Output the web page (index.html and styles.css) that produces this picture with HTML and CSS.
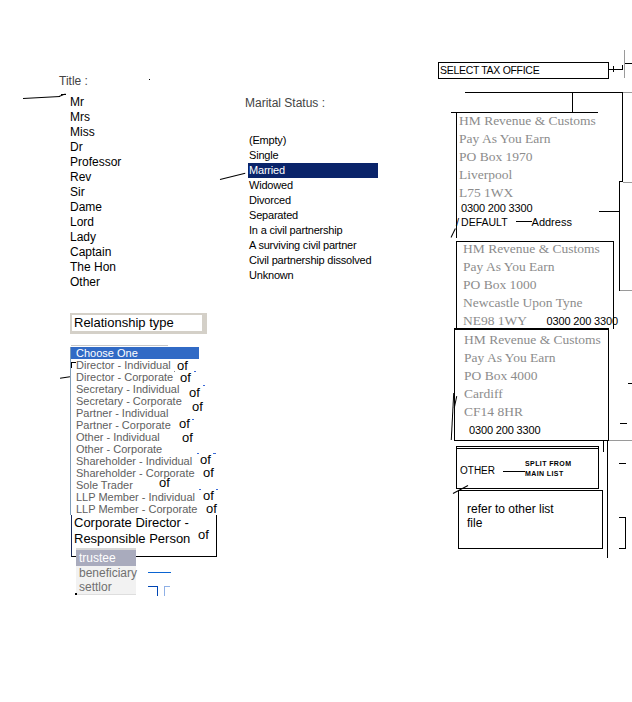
FILE: index.html
```html
<!DOCTYPE html>
<html>
<head>
<meta charset="utf-8">
<link rel="stylesheet" href="styles.css">
</head>
<body>
<div class="canvas">
  <div class="title-label">Title :</div>
  <ul class="title-list">
    <li>Mr</li><li>Mrs</li><li>Miss</li><li>Dr</li><li>Professor</li><li>Rev</li><li>Sir</li><li>Dame</li><li>Lord</li><li>Lady</li><li>Captain</li><li>The Hon</li><li>Other</li>
  </ul>

  <div class="marital-label">Marital Status :</div>
  <ul class="marital-list">
    <li>(Empty)</li><li>Single</li><li class="sel">Married</li><li>Widowed</li><li>Divorced</li><li>Separated</li><li>In a civil partnership</li><li>A surviving civil partner</li><li>Civil partnership dissolved</li><li>Unknown</li>
  </ul>

  <div class="rel-box">Relationship type</div>
  <ul class="rel-list">
    <li class="sel">Choose One</li>
    <li>Director - Individual</li>
    <li>Director - Corporate</li>
    <li>Secretary - Individual</li>
    <li>Secretary - Corporate</li>
    <li>Partner - Individual</li>
    <li>Partner - Corporate</li>
    <li>Other - Individual</li>
    <li>Other - Corporate</li>
    <li>Shareholder - Individual</li>
    <li>Shareholder - Corporate</li>
    <li>Sole Trader</li>
    <li>LLP Member - Individual</li>
    <li>LLP Member - Corporate</li>
  </ul>
  <div class="corp-box">Corporate Director -<br>Responsible Person</div>
  <ul class="party-list">
    <li class="sel">trustee</li><li>beneficiary</li><li>settlor</li>
  </ul>

  <span class="of of1">of</span>
  <span class="of of2">of</span>
  <span class="of of3">of</span>
  <span class="of of4">of</span>
  <span class="of of5">of</span>
  <span class="of of6">of</span>
  <span class="of of7">of</span>
  <span class="of of8">of</span>
  <span class="of of9">of</span>
  <span class="of of10">of</span>
  <span class="of of11">of</span>
  <span class="of of12">of</span>

  <div class="tax-select">SELECT TAX OFFICE</div>

  <div class="addr addr1">
    <div class="row">HM Revenue &amp; Customs</div>
    <div class="row">Pay As You Earn</div>
    <div class="row">PO Box 1970</div>
    <div class="row">Liverpool</div>
    <div class="row">L75 1WX</div>
    <div class="phone">0300 200 3300</div>
    <div class="default-row"><span class="slash">/</span><span class="dflt">DEFAULT</span><span class="dash"></span><span>Address</span></div>
  </div>

  <div class="addr addr2">
    <div class="row first">HM Revenue &amp; Customs</div>
    <div class="row">Pay As You Earn</div>
    <div class="row">PO Box 1000</div>
    <div class="row">Newcastle Upon Tyne</div>
    <div class="row last"><span>NE98 1WY</span><span class="phone inline">0300 200 3300</span></div>
  </div>

  <div class="addr addr3">
    <div class="row">HM Revenue &amp; Customs</div>
    <div class="row">Pay As You Earn</div>
    <div class="row">PO Box 4000</div>
    <div class="row">Cardiff</div>
    <div class="row">CF14 8HR</div>
    <div class="phone">0300 200 3300</div>
  </div>

  <div class="other-box">
    <span class="other-label">OTHER</span>
    <span class="other-line"></span>
    <span class="split">SPLIT FROM<br>MAIN LIST</span>
  </div>

  <div class="refer-box">refer to other list<br>file</div>

  <!-- connector strokes of the diagram -->
  <div class="ln t1"></div>
  <div class="ln t2"></div>
  <div class="ln t3"></div>
  <div class="ln dot1"></div>
  <div class="ln m1"></div>
  <div class="ln r1"></div>
  <div class="ln r2"></div>
  <div class="ln r3"></div>
  <div class="ln r4"></div>
  <div class="ln bd b1"></div>
  <div class="ln bd b2"></div>
  <div class="ln bd b3"></div>
  <div class="ln bd b4"></div>
  <div class="ln bd b5"></div>
  <div class="ln bd b6"></div>
  <div class="ln bd b7"></div>
  <div class="ln bd b8"></div>
  <div class="ln blue1"></div>
  <div class="ln blue2"></div>
  <div class="ln blue3"></div>
  <div class="ln lblue1"></div>
  <div class="ln lblue2"></div>
  <div class="ln dot2"></div>

  <div class="ln s1"></div>
  <div class="ln s2"></div>
  <div class="ln s3"></div>
  <div class="ln gray s4"></div>
  <div class="ln s5"></div>
  <div class="ln k1"></div>
  <div class="ln gray k1g"></div>
  <div class="ln k2"></div>
  <div class="ln k3"></div>
  <div class="ln k4"></div>
  <div class="ln k5"></div>
  <div class="ln k6"></div>
  <div class="ln gray k7"></div>
  <div class="ln gray k8"></div>
  <div class="ln k9"></div>
  <div class="ln sl1"></div>
  <div class="ln sl2"></div>
  <div class="ln sl3"></div>
  <div class="ln gray g1"></div>
  <div class="ln d1"></div>
  <div class="ln d2"></div>
  <div class="ln d3"></div>
  <div class="ln v1"></div>
  <div class="ln v2"></div>
  <div class="ln br1"></div>
  <div class="ln br2"></div>
  <div class="ln br3"></div>
  <div class="ln sl4"></div>
</div>
</body>
</html>
```

FILE: styles.css
```css
* { box-sizing: border-box; margin: 0; padding: 0; }
html, body { width: 632px; height: 702px; overflow: hidden; background: #fff; }
body { font-family: "Liberation Sans", Arial, sans-serif; color: #000; }
ul { list-style: none; }

.canvas { position: relative; width: 632px; height: 702px; }

/* Title */
.title-label { position: absolute; left: 59px; top: 74px; font-size: 12px; line-height: 15px; color: #444; }
.title-list { position: absolute; left: 70px; top: 95px; font-size: 12px; line-height: 15px; }

/* Marital */
.marital-label { position: absolute; left: 245px; top: 96px; font-size: 12px; line-height: 15px; color: #444; }
.marital-list { position: absolute; left: 248px; top: 133px; width: 130px; font-size: 11px; line-height: 15px; letter-spacing: -0.2px; }
.marital-list li { padding-left: 1px; }
.marital-list .sel { background: #0a246a; color: #fff; }

/* Relationship */
.rel-box {
  position: absolute; left: 70px; top: 313px; width: 137px; height: 21px;
  border-style: solid; border-color: #d4d0c8; border-width: 2px 5px 3px 2px;
  font-size: 13px; line-height: 16px; padding: 0 0 0 2px;
}
.rel-list {
  position: absolute; left: 70px; top: 347px; width: 129px;
  border-left: 1px solid #7f9db9;
  font-size: 11px; line-height: 12px; color: #606060;
}
.rel-list li { padding-left: 5px; white-space: nowrap; }
.rel-list .sel { background: #316ac5; color: #fff; }

.corp-box {
  position: absolute; left: 71px; top: 515px; width: 146px; height: 42px;
  border-left: 1px solid #1a2a5a; border-right: 1px solid #000; border-bottom: 1px solid #000;
  font-size: 13px; line-height: 16px; padding-left: 2px;
}
.party-list {
  position: absolute; left: 76px; top: 548px; width: 60px;
  background: #f2f2f2; border-top: 2px solid #d8d8d8; border-bottom: 1px solid #dedede;
  font-size: 12px; line-height: 14px; color: #707070;
}
.party-list li { padding-left: 3px; }
.party-list .sel { background: #a9abbd; color: #fff; line-height: 16px; }

.of { position: absolute; font-size: 13px; line-height: 8px; color: #000; }
.of1 { left: 175px; top: 360px; background: #fff; padding: 2px 2px 1px 2px; }
.of2 { left: 180px; top: 374px; }
.of3 { left: 189px; top: 389px; }
.of4 { left: 192px; top: 403px; }
.of5 { left: 179px; top: 420px; }
.of6 { left: 182px; top: 434px; }
.of7 { left: 200px; top: 456px; }
.of8 { left: 203px; top: 469px; }
.of9 { left: 159px; top: 479px; }
.of10 { left: 203px; top: 492px; }
.of11 { left: 206px; top: 505px; }
.of12 { left: 198px; top: 531px; }

/* Tax office */
.tax-select {
  position: absolute; left: 438px; top: 62px; width: 171px; height: 17px;
  border: 1px solid #000; font-size: 10.5px; letter-spacing: -0.3px; line-height: 15px; padding-left: 1px;
}

.addr { position: absolute; }
.addr .row { font-family: "Liberation Serif", "Times New Roman", serif; font-size: 13.5px; line-height: 18px; color: #8c8c8c; white-space: nowrap; }
.phone { font-family: "Liberation Sans", Arial, sans-serif; font-size: 11px; line-height: 13px; letter-spacing: -0.15px; color: #000; }

.addr1 { left: 456px; top: 112px; width: 143px; height: 126px; border-left: 1px solid #000; padding-left: 2px; }
.addr1 .phone { padding-left: 2px; }
.default-row { display: flex; align-items: center; font-size: 11px; line-height: 14px; }
.default-row .slash { margin-left: -3px; margin-right: 2px; }
.default-row .dflt { font-size: 10.5px; }
.default-row .dash { width: 16px; height: 1px; background: #000; margin: 0 0 2px 8px; }

.addr2 { left: 456px; top: 241px; width: 158px; height: 88px; border: 1px solid #000; border-bottom: none; padding-left: 6px; }
.addr2 .first { margin-top: -2px; }
.addr2 .last { display: flex; align-items: baseline; }
.addr2 .phone.inline { margin-left: auto; margin-right: -5px; }

.addr3 { left: 454px; top: 328px; width: 155px; height: 113px; border: 1px solid #000; border-top-width: 2px; padding: 1px 0 0 9px; }
.addr3 .phone { margin-top: 3px; padding-left: 5px; }

.other-box {
  position: absolute; left: 456px; top: 446px; width: 143px; height: 43px;
  border: 1px solid #000; border-top: 3px double #000;
  display: flex; align-items: center; padding: 5px 0 0 3px;
}
.other-label { font-size: 10px; line-height: 12px; }
.other-line { width: 22px; height: 1px; background: #000; margin: 0 0 0 8px; }
.split { font-size: 7px; font-weight: bold; line-height: 10px; letter-spacing: 0.4px; margin-top: -4px; }

.refer-box {
  position: absolute; left: 458px; top: 490px; width: 145px; height: 59px;
  border: 1px solid #000; padding: 11px 0 0 8px; font-size: 12px; line-height: 14px;
}

/* connector strokes */
.ln { position: absolute; background: #000; height: 1px; }
.gray { background: #9a9a9a; }
.t1 { left: 23px; top: 98px; width: 37px; transform: rotate(-3deg); transform-origin: left center; }
.t2 { left: 59px; top: 96px; width: 7px; transform: rotate(-22deg); transform-origin: left center; }
.t3 { left: 61px; top: 94px; width: 5px; }
.dot1 { left: 149px; top: 79px; width: 1px; }
.m1 { left: 220px; top: 179px; width: 26px; transform: rotate(-14deg); transform-origin: left center; }
.r1 { left: 71px; top: 362px; width: 5px; }
.r2 { left: 71px; top: 362px; width: 1px; height: 6px; }
.r3 { left: 60px; top: 377px; width: 10px; transform: rotate(-8deg); }
.r4 { left: 71px; top: 345px; width: 97px; background: #c8c8c8; }
.bd { background: #3a6ad8; width: 2px; }
.b1 { left: 194px; top: 371px; }
.b2 { left: 203px; top: 385px; }
.b3 { left: 192px; top: 419px; }
.b4 { left: 197px; top: 453px; }
.b5 { left: 213px; top: 453px; width: 3px; }
.b6 { left: 199px; top: 489px; }
.b7 { left: 216px; top: 489px; }
.b8 { left: 174px; top: 371px; width: 1px; background: #888; }
.blue1 { left: 148px; top: 572px; width: 23px; background: #0a64d2; }
.blue2 { left: 148px; top: 586px; width: 10px; background: #0046b4; }
.blue3 { left: 157px; top: 586px; width: 1px; height: 10px; background: #0046b4; }
.lblue1 { left: 164px; top: 586px; width: 6px; background: #8fb0e6; }
.lblue2 { left: 164px; top: 586px; width: 1px; height: 10px; background: #8fb0e6; }
.dot2 { left: 75px; top: 593px; width: 2px; height: 2px; }

.s1 { left: 608px; top: 69px; width: 14px; }
.s2 { left: 613px; top: 66px; width: 1px; height: 6px; }
.s3 { left: 622px; top: 65px; width: 1px; height: 5px; }
.s4 { left: 624px; top: 50px; width: 1px; height: 28px; }
.s5 { left: 625px; top: 63px; width: 7px; }
.k1 { left: 465px; top: 92px; width: 158px; }
.k1g { left: 623px; top: 92px; width: 9px; }
.k2 { left: 572px; top: 93px; width: 1px; height: 19px; }
.k3 { left: 451px; top: 112px; width: 147px; }
.k4 { left: 622px; top: 92px; width: 1px; height: 90px; }
.k5 { left: 619px; top: 181px; width: 4px; }
.k6 { left: 619px; top: 181px; width: 1px; height: 110px; }
.k7 { left: 620px; top: 290px; width: 12px; }
.k8 { left: 623px; top: 182px; width: 9px; }
.k9 { left: 599px; top: 211px; width: 20px; }
.sl1 { left: 451px; top: 237px; width: 10px; transform: rotate(-64deg); transform-origin: left center; }
.sl2 { left: 452px; top: 393px; width: 1px; height: 47px; transform: rotate(3deg); }
.sl3 { left: 455px; top: 396px; width: 1px; height: 12px; transform: rotate(12deg); }
.g1 { left: 609px; top: 440px; width: 23px; }
.d1 { left: 620px; top: 423px; width: 7px; }
.d2 { left: 628px; top: 383px; width: 4px; }
.d3 { left: 619px; top: 463px; width: 7px; }
.v1 { left: 607px; top: 440px; width: 1px; height: 118px; }
.v2 { left: 603px; top: 440px; width: 1px; height: 12px; }
.br1 { left: 619px; top: 517px; width: 7px; }
.br2 { left: 625px; top: 517px; width: 1px; height: 32px; }
.br3 { left: 619px; top: 548px; width: 7px; }
.sl4 { left: 453px; top: 493px; width: 17px; transform: rotate(-28deg); transform-origin: left center; }
```
